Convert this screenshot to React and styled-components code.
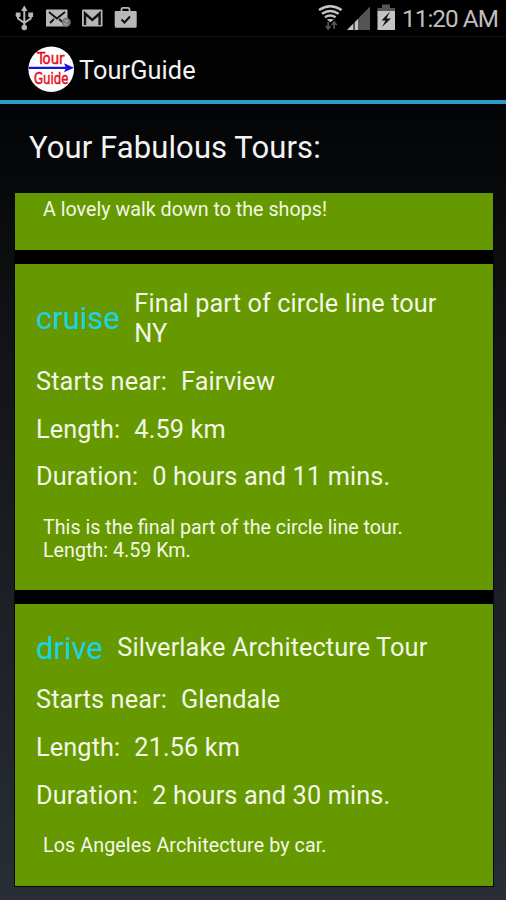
import React from 'react';
import styled, { createGlobalStyle } from 'styled-components';

const GlobalStyle = createGlobalStyle`
  body {
    margin: 0;
    background: #000000;
    font-family: Roboto, 'Noto Sans', sans-serif;
  }
`;

const Screen = styled.div`
  display: flex;
  flex-direction: column;
  width: 506px;
  height: 900px;
  overflow: hidden;
  color: #f3f3f3;
  background: linear-gradient(#000000 36px, #030405 110px, #121417 350px, #292d35 900px);
`;

const StatusBar = styled.div`
  display: flex;
  justify-content: space-between;
  align-items: center;
  box-sizing: border-box;
  height: 36px;
  background: #000000;
`;

const Icons = styled.svg`
  display: block;
  flex: none;
`;

const StatusRight = styled.div`
  display: flex;
  align-items: center;
  gap: 2px;
`;

const Clock = styled.span`
  width: 104px;
  color: #bebebe;
  font-size: 24.3px;
  line-height: 37px;
  letter-spacing: -0.95px;
  white-space: nowrap;
`;

const ActionBar = styled.div`
  display: flex;
  align-items: center;
  box-sizing: border-box;
  height: 68px;
  padding: 2px 0 0 28px;
  border-top: 1px solid #111111;
  border-bottom: 4px solid #2b9bc7;
  background: #020202;
`;

const AppTitle = styled.h1`
  margin: 2px 0 0 4px;
  font-size: 25.3px;
  font-weight: 400;
  letter-spacing: 0.1px;
`;

const Heading = styled.h2`
  margin: 25px 0 0 29px;
  height: 64px;
  font-size: 31px;
  font-weight: 400;
  line-height: 38px;
  white-space: nowrap;
  letter-spacing: 0.1px;
`;

const List = styled.div`
  display: flex;
  flex-direction: column;
  gap: 14px;
  width: 478px;
  margin-left: 14.5px;
  background: #000000;
  box-shadow: 0 0 0 1px #07080f;
`;

const Card = styled.div`
  box-sizing: border-box;
  padding: ${({ $scrolled }) => ($scrolled ? '5px' : '25.5px')} 21.5px 28.5px;
  color: #f2f7e6;
  background: #669900;
`;

const TitleRow = styled.div`
  display: flex;
  align-items: center;
  gap: 14.5px;
  margin-bottom: 9px;
`;

const Kind = styled.span`
  color: #17d4e6;
  font-size: 31px;
  line-height: 37px;
`;

const Title = styled.span`
  max-width: 315px;
  font-size: 25.3px;
  line-height: 29.7px;
  letter-spacing: 0.1px;
`;

const Row = styled.div`
  display: flex;
  align-items: center;
  gap: 14px;
  height: 47.8px;
  font-size: 25.3px;
  white-space: nowrap;
  letter-spacing: 0.11px;
`;

const Description = styled.p`
  margin: ${({ $scrolled }) => ($scrolled ? 0 : '15px')} 7px 0;
  font-size: 19.7px;
  line-height: 23px;
  white-space: pre-line;
  letter-spacing: ${({ $spacing = 0 }) => $spacing}px;
`;

const tours = [
  {
    kind: 'cruise',
    title: 'Final part of circle line tour NY',
    start: 'Fairview',
    length: '4.59 km',
    duration: '0 hours and 11 mins.',
    description: 'This is the final part of the circle line tour.\nLength: 4.59 Km.',
  },
  {
    kind: 'drive',
    title: 'Silverlake Architecture Tour',
    start: 'Glendale',
    length: '21.56 km',
    duration: '2 hours and 30 mins.',
    description: 'Los Angeles Architecture by car.',
    spacing: 0.09,
  },
];

const Notifications = () => (
  <Icons width="150" height="36" viewBox="0 0 150 36">
    <g fill="none" stroke="#b8b8b8" strokeWidth="2">
      <path d="M24.3 9v18M18 14v4.5l6.3 4.5M30.7 14v4.5L24.3 23" />
    </g>
    <g fill="#b8b8b8">
      <path d="M24.3 5.5l3.3 5.5h-6.6z" />
      <rect x="15.7" y="12.5" width="4.8" height="4.5" rx="1" />
      <rect x="28.3" y="12.5" width="4.8" height="4.5" />
      <circle cx="24.3" cy="27.5" r="2.8" />
      <rect x="46" y="9.5" width="21.5" height="17" />
    </g>
    <path d="M49 12l7.8 6.5L65 12M50 23l4-4M59 19l4 3.5" fill="none" stroke="#111111" strokeWidth="1.8" />
    <circle cx="66.2" cy="22.3" r="4.5" fill="#777777" />
    <path d="M64 20l4 1-4 3 4 1" fill="none" stroke="#aaaaaa" strokeWidth="1" />
    <rect x="82" y="9.5" width="20.5" height="17" rx="1.2" fill="#b8b8b8" />
    <path d="M85 25V13.5l7.3 6.5 7.3-6.5V25" fill="none" stroke="#111111" strokeWidth="2.4" />
    <path d="M121.5 12V9.5q0-1.7 1.7-1.7h4.6q1.7 0 1.7 1.7V12" fill="none" stroke="#b8b8b8" strokeWidth="1.8" />
    <path d="M115.5 11h20.2q1.2 0 1 1.2v14q0 1.5-1.500 1.500h-19q-1.500 0-1.500-1.500v-14q0-1.200.8-1.200z" fill="#b8b8b8" />
    <path d="M121.5 19.5l3 3 5.5-6" fill="none" stroke="#111111" strokeWidth="2" />
  </Icons>
);

const Signals = () => (
  <Icons width="85" height="36" viewBox="315 0 85 36">
    <g fill="none" stroke="#c4c4c4" strokeWidth="2.5">
      <path d="M319 10q11.3-7.5 22.600 0M322 13.800q8.300-5.500 16.600 0M325 17.300q5.300-3.400 10.600 0" />
    </g>
    <path d="M326.800 19.600q3.500-1.400 7 0l-3.500 2.600z" fill="#c4c4c4" />
    <path d="M328.200 22v6.500M325.700 26l2.500 3 2.500-3M334.200 29v-6.500M331.700 25l2.500-3 2.500 3" fill="none" stroke="#555555" strokeWidth="1.700" />
    <path d="M347 30L370 6.500V30z" fill="#555555" />
    <path d="M347 30l6-6V30zM355 30v-8l3-3V30z" fill="#c4c4c4" />
    <path d="M382 8V4.500h8v3.500h5v8h-17.500V8z" fill="#555555" />
    <path d="M377.500 11h17.500v19h-17.500z" fill="#c4c4c4" />
    <path d="M390 11.500l-8.500 9h4l-3.500 6.500 9-8.500h-4.500z" fill="#111111" />
  </Icons>
);

const Logo = () => (
  <Icons width="47" height="47" viewBox="0 0 47 47">
    <circle cx="23.200" cy="23.200" r="22.800" fill="#ffffff" />
    <g fill="#e80b16" stroke="#e80b16" strokeWidth="0.500" fontFamily="DejaVu Sans Condensed, DejaVu Sans, sans-serif" fontSize="16">
      <text x="9" y="18" textLength="27.500" lengthAdjust="spacingAndGlyphs">Tour</text>
      <text x="6" y="37.500" textLength="34.500" lengthAdjust="spacingAndGlyphs">Guide</text>
    </g>
    <path d="M0.800 21.800H40" stroke="#1a10dc" strokeWidth="2.300" />
    <path d="M36 17.300l10 4.500-10 4.500 2-4.500z" fill="#1a10dc" />
  </Icons>
);

const Tour = ({ tour }) => (
  <Card>
    <TitleRow>
      <Kind>{tour.kind}</Kind>
      <Title>{tour.title}</Title>
    </TitleRow>
    <Row>
      <span>Starts near:</span>
      <span>{tour.start}</span>
    </Row>
    <Row>
      <span>Length:</span>
      <span>{tour.length}</span>
    </Row>
    <Row>
      <span>Duration:</span>
      <span>{tour.duration}</span>
    </Row>
    <Description $spacing={tour.spacing}>{tour.description}</Description>
  </Card>
);

export default function App() {
  return (
    <>
      <GlobalStyle />
      <Screen>
        <StatusBar>
          <Notifications />
          <StatusRight>
            <Signals />
            <Clock>11:20 AM</Clock>
          </StatusRight>
        </StatusBar>
        <ActionBar>
          <Logo />
          <AppTitle>TourGuide</AppTitle>
        </ActionBar>
        <Heading>Your Fabulous Tours:</Heading>
        <List>
          <Card $scrolled>
            <Description $scrolled>A lovely walk down to the shops!</Description>
          </Card>
          {tours.map(tour => <Tour key={tour.title} tour={tour} />)}
        </List>
      </Screen>
    </>
  );
}
